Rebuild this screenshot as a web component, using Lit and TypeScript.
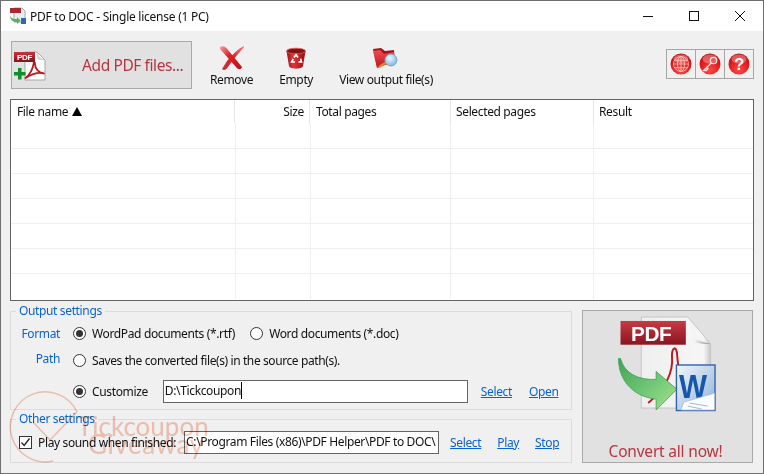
import { LitElement, html, css, svg } from 'lit';
import { customElement } from 'lit/decorators.js';

const COLUMNS = [
  { label: 'File name', cls: 'name' },
  { label: 'Size', cls: 'size' },
  { label: 'Total pages', cls: 'total' },
  { label: 'Selected pages', cls: 'selected' },
  { label: 'Result', cls: 'result' },
];

const addIcon = svg`
  <svg width="34" height="34" viewBox="0 0 34 34">
    <defs>
      <linearGradient id="ban" x1="0" y1="0" x2="0" y2="1"><stop offset="0" stop-color="#c9323c"/><stop offset="1" stop-color="#82141c"/></linearGradient>
      <linearGradient id="fold" x1="0" y1="0" x2="1" y2="1"><stop offset="0" stop-color="#fff"/><stop offset="1" stop-color="#b4b4b4"/></linearGradient>
    </defs>
    <path d="M11 4 H23 L31 12 V32 H11 Z" fill="#fdfdfd" stroke="#a8a8a8"/>
    <path d="M23 4 C24 8 25 11 31 12 L24 11 Z" fill="url(#fold)" stroke="#bbb" stroke-width=".5"/>
    <rect x="0" y="4" width="21" height="10" fill="url(#ban)"/>
    <text x="10.5" y="12" font-family="Liberation Sans" font-size="8" font-weight="700" fill="#fff" text-anchor="middle">PDF</text>
    <path d="M11.5 30 C16 27 19 20 19.5 16 C19.5 14 21 14 21 16 C21 21 25 25 30 25.5 C25 24 18 26 11.5 30 Z" fill="none" stroke="#bd141c" stroke-width="1.8" stroke-linejoin="round"/>
    <path d="M4 20 H7.5 V24 H11.5 V27.5 H7.5 V31.5 H4 V27.5 H0 V24 H4 Z" fill="#0d8f2b"/>
  </svg>`;

const removeIcon = svg`
  <svg width="26" height="26" viewBox="0 0 26 26">
    <defs>
      <linearGradient id="xa" x1="0" y1="0" x2="1" y2="1"><stop offset="0" stop-color="#f4a0a0"/><stop offset=".4" stop-color="#dc2228"/><stop offset="1" stop-color="#b81218"/></linearGradient>
      <linearGradient id="xb" x1="1" y1="0" x2="0" y2="1"><stop offset="0" stop-color="#f08888"/><stop offset=".5" stop-color="#d81c22"/><stop offset="1" stop-color="#c8363c"/></linearGradient>
    </defs>
    <path d="M1 2 C4 0 7 2 9 5 L23 22 C22 25 19 25 17 22 L1 4 Z" fill="url(#xa)"/>
    <path d="M25 1 C20 3 13 10 8 16 L3 24 C5 26 7 25 9 22 L14 15 C18 10 23 5 25 2 Z" fill="url(#xb)"/>
  </svg>`;

const emptyIcon = svg`
  <svg width="22" height="24" viewBox="0 0 22 24">
    <defs>
      <linearGradient id="bg" x1="0" y1="0" x2="1" y2="0"><stop offset="0" stop-color="#9c1016"/><stop offset=".35" stop-color="#e0363a"/><stop offset="1" stop-color="#940e14"/></linearGradient>
    </defs>
    <path d="M1.5 5 L4 20 C4.5 23.5 17.5 23.5 18 20 L20.5 5 Z" fill="url(#bg)"/>
    <ellipse cx="11" cy="5" rx="9.5" ry="2.8" fill="#86100f" stroke="#e4585c" stroke-width=".8"/>
    <g fill="none" stroke="#fff" stroke-width="1.7">
      <path d="M9 11.5 L11 8.8 L13 11.5"/>
      <path d="M15.5 12.8 L16.5 15.8 H13.5"/>
      <path d="M10 16 H6.6 L8.2 13"/>
    </g>
  </svg>`;

const viewIcon = svg`
  <svg width="28" height="24" viewBox="0 0 28 24">
    <defs>
      <linearGradient id="fg" x1="0" y1="0" x2="0" y2="1"><stop offset="0" stop-color="#ee4e54"/><stop offset="1" stop-color="#bc181e"/></linearGradient>
      <radialGradient id="mg" cx=".4" cy=".35" r=".7"><stop offset="0" stop-color="#eef8ff"/><stop offset="1" stop-color="#74b4e4"/></radialGradient>
    </defs>
    <path d="M1 3 L9 2 L13 5 L22 4 L23 16 L5 21 Z" fill="#a81218"/>
    <path d="M1 5 L8 4 L12 8 L22 6 L21 16 L5 22 Z" fill="url(#fg)"/>
    <path d="M7 21 L15 16" stroke="#dc8a30" stroke-width="2.6"/>
    <circle cx="19" cy="14" r="6" fill="url(#mg)" stroke="#84a4c0"/>
  </svg>`;

const sphere = (glyph: unknown) => svg`
  <svg width="22" height="22" viewBox="0 0 22 22">
    <defs>
      <radialGradient id="sp" cx=".5" cy=".8" r=".85"><stop offset="0" stop-color="#fb4a42"/><stop offset=".6" stop-color="#e0191c"/><stop offset="1" stop-color="#b20f12"/></radialGradient>
    </defs>
    <circle cx="11" cy="11" r="10.5" fill="url(#sp)"/>
    <ellipse cx="11" cy="6" rx="7.5" ry="4.5" fill="#fff" opacity=".3"/>
    ${glyph}
  </svg>`;

const globeIcon = sphere(svg`
  <g fill="none" stroke="#ffc9c4" stroke-width=".8">
    <circle cx="11" cy="11" r="7.5"/><ellipse cx="11" cy="11" rx="3.5" ry="7.5"/>
    <path d="M11 3.5 V18.5 M3.5 11 H18.5 M4.6 7.3 H17.4 M4.6 14.7 H17.4"/>
  </g>`);
const keyIcon = sphere(svg`
  <g fill="none" stroke="#ffe4e0" stroke-width="1.3">
    <circle cx="14.5" cy="7.5" r="3.2"/><path d="M12.3 10 L4.5 17.5 H7.5 L9 15.5 M7 15 L9.5 15.5"/>
  </g>`);
const helpIcon = sphere(svg`
  <text x="11" y="17" font-family="Liberation Sans" font-size="17" font-weight="700" fill="#fff" text-anchor="middle">?</text>`);

const convertIcon = svg`
  <svg width="102" height="98" viewBox="0 0 102 98">
    <defs>
      <linearGradient id="cb" x1="0" y1="0" x2="0" y2="1"><stop offset="0" stop-color="#c83a44"/><stop offset="1" stop-color="#8a1520"/></linearGradient>
      <linearGradient id="ca" x1="0" y1="0" x2="1" y2="1"><stop offset="0" stop-color="#3fa452"/><stop offset=".55" stop-color="#72c878"/><stop offset="1" stop-color="#a6e48c"/></linearGradient>
      <linearGradient id="cw" x1="0" y1="0" x2="1" y2="1"><stop offset="0" stop-color="#f2f6fb"/><stop offset="1" stop-color="#8fb2da"/></linearGradient>
      <linearGradient id="cf" x1="0" y1="0" x2="1" y2="1"><stop offset="0" stop-color="#fff"/><stop offset=".6" stop-color="#f2f2f2"/><stop offset="1" stop-color="#8c8c8c"/></linearGradient>
      <linearGradient id="cp" x1="0" y1="0" x2="1" y2="0"><stop offset="0" stop-color="#efefef"/><stop offset=".9" stop-color="#f6f6f6"/><stop offset="1" stop-color="#c8c8c8"/></linearGradient>
    </defs>
    <path d="M23 1 H70 L93 28 V93 H23 Z" fill="url(#cp)" stroke="#c4c4c4"/>
    <path d="M70 1 C71 15 74 25 93 28 C84 29 74 27 70 22 Z" fill="url(#cf)"/>
    <rect x="2" y="5" width="66" height="24" fill="url(#cb)"/>
    <text x="33" y="25" font-family="Liberation Sans" font-size="21" font-weight="700" fill="#fff" text-anchor="middle">PDF</text>
    <path d="M30 88 C44 76 56 60 54 40 C54 32 58 30 59 37 C60 48 60 55 66 66" fill="none" stroke="#c21820" stroke-width="2"/>
    <path d="M0 43 L2 43 C6 58 20 65 38 64 V56 L59 74 L38 95 V84 C18 82 0 68 0 43 Z" fill="url(#ca)" stroke="#3f9e50" stroke-width=".8"/>
    <rect x="58.5" y="49.5" width="39" height="46" fill="url(#cw)" stroke="#2f62a8" stroke-width="1.4"/>
    <text x="75" y="83" font-family="Liberation Sans" font-size="33" font-weight="700" fill="#1457ab" text-anchor="middle" textLength="28" lengthAdjust="spacingAndGlyphs">W</text>
    <path d="M63 95 L66 87 L97 78 V95 Z" fill="#fbfcfe" stroke="#a8bcd4" stroke-width=".8"/>
    <path d="M72 88 L90 91 M70 91 L84 94" stroke="#9db8d8" stroke-width="1"/>
  </svg>`;

const appIcon = svg`
  <svg width="18" height="18" viewBox="0 0 18 18">
    <path d="M5 1 H13 L16 4 V15 H5 Z" fill="#ececec" stroke="#a8a8a8"/>
    <rect x="1" y="1" width="11" height="5" fill="#a82830"/>
    <path d="M1 8 C2 12 5 12 8 12 V10 L11.5 13.5 L8 17 V15 C4 15 1 13 1 8 Z" fill="#58b060"/>
    <rect x="12" y="11" width="5" height="6" fill="#2c68b4"/>
  </svg>`;

const checkMark = svg`
  <svg width="11" height="11" viewBox="0 0 11 11"><path d="M1.5 5.5 L4.2 8.5 L9.5 1.5" fill="none" stroke="#222" stroke-width="1.3"/></svg>`;

const sortArrow = svg`
  <svg class="sort" width="10" height="9" viewBox="0 0 10 9"><path d="M5 0 L10 9 H0 Z" fill="#000"/></svg>`;

@customElement('app-root')
export class AppRoot extends LitElement {
  static styles = css`
    :host {
      display: block;
      position: relative;
      width: 764px;
      height: 474px;
      box-sizing: border-box;
      border: 1px solid #6f6f6f;
      background: #f0f0f0;
      overflow: hidden;
      font-family: 'Noto Sans', sans-serif;
      font-size: 12px;
      letter-spacing: -0.36px;
      color: #111;
    }
    button {
      font: inherit;
      letter-spacing: inherit;
      cursor: pointer;
      padding: 0;
    }
    .titlebar {
      height: 30px;
      background: #fff;
      display: flex;
      align-items: center;
      padding-left: 8px;
    }
    .titlebar .title {
      margin-left: 3px;
      flex: 1;
      letter-spacing: -0.25px;
    }
    .winctl {
      width: 46px;
      display: flex;
      justify-content: center;
    }
    .toolbar {
      height: 68px;
      display: flex;
      align-items: flex-start;
      padding-left: 10px;
      box-sizing: border-box;
    }
    .add {
      margin-top: 10px;
      width: 181px;
      height: 48px;
      border: 1px solid #a9a9a9;
      background: #e1e1e1;
      display: flex;
      align-items: center;
      padding: 0 0 0 2px;
      box-sizing: border-box;
    }
    .add span,
    .convert span {
      font-size: 15.5px;
      color: #b93440;
      letter-spacing: -0.2px;
    }
    .add span {
      margin-left: 34px;
      letter-spacing: -0.4px;
    }
    .tools {
      display: flex;
      gap: 26px;
      margin-left: 18px;
      flex: 1;
    }
    .tool {
      display: flex;
      flex-direction: column;
      align-items: center;
      height: 68px;
      padding-top: 14px;
      box-sizing: border-box;
    }
    .tool .ico {
      height: 26px;
      display: flex;
      align-items: center;
    }
    .tool .lbl {
      margin-top: 1px;
      line-height: 16px;
    }
    .links {
      display: flex;
      margin: 18px 9px 0 0;
      border: 1px solid #a6a6a6;
    }
    .links div {
      width: 28px;
      height: 28px;
      display: flex;
      align-items: center;
      justify-content: center;
    }
    .links div + div {
      border-left: 1px solid #a6a6a6;
    }
    .list {
      margin: 0 9px;
      height: 202px;
      box-sizing: border-box;
      border: 1px solid #646464;
      background: #fff;
    }
    .row {
      display: grid;
      grid-template-columns: 225px 75px 140px 143px 1fr;
      height: 25px;
      box-sizing: border-box;
      border-bottom: 1px solid #efefef;
    }
    .row > div {
      border-right: 1px solid #efefef;
      padding: 0 5px;
      line-height: 23px;
    }
    .row > div:last-child {
      border-right: 0;
    }
    .row.head {
      grid-template-columns: 224px 75px 141px 143px 1fr;
      height: 24px;
      border-bottom: 0;
    }
    .row.head > div {
      border-right-color: #e5e5e5;
    }
    .row.head .name {
      display: flex;
      align-items: center;
      gap: 4px;
      padding: 0 0 1px 6px;
      box-sizing: border-box;
      height: 23px;
    }
    .row.head .total {
      padding-left: 6px;
    }
    .size {
      text-align: right;
    }
    .row.last {
      border-bottom: 0;
    }
    .bottom {
      display: flex;
      margin: 2px 10px 0 9px;
    }
    .settings {
      width: 562px;
      flex: none;
    }
    fieldset {
      margin: 0;
      padding: 0;
      border: 1px solid #dcdcdc;
      box-sizing: border-box;
      min-width: 0;
    }
    legend {
      margin-left: 5px;
      padding: 0 3px;
      color: #0a62d0;
      line-height: 16px;
    }
    .output {
      height: 107px;
    }
    .grid {
      display: grid;
      grid-template-columns: 49px 1fr;
      grid-template-rows: 26px 28px 34px;
      column-gap: 13px;
      align-items: center;
      padding-top: 1px;
    }
    .key {
      text-align: right;
      color: #0a62d0;
    }
    .key.path {
      margin-bottom: 3px;
    }
    .line {
      display: flex;
      align-items: center;
    }
    .opt {
      display: flex;
      align-items: center;
      gap: 6px;
    }
    .opt + .opt {
      margin-left: 15px;
    }
    .opt.long {
      letter-spacing: -0.4px;
    }
    .radio {
      width: 13px;
      height: 13px;
      box-sizing: border-box;
      border: 1px solid #333;
      border-radius: 50%;
      background: #fff;
      display: flex;
      align-items: center;
      justify-content: center;
    }
    .radio.on::after {
      content: '';
      width: 7px;
      height: 7px;
      border-radius: 50%;
      background: #333;
    }
    .field {
      height: 23px;
      box-sizing: border-box;
      border: 1px solid #646464;
      background: #fff;
      padding-left: 1px;
      line-height: 19px;
      white-space: nowrap;
      overflow: hidden;
    }
    .field.path {
      width: 305px;
      margin-left: 15px;
    }
    .caret {
      border-right: 1px solid #000;
    }
    a {
      color: #0a62d0;
      text-decoration: underline;
    }
    .path-links {
      margin-left: 13px;
      display: flex;
      gap: 17px;
    }
    .other {
      height: 52px;
      margin-top: 1px;
    }
    .other .line {
      padding: 4px 0 0 8px;
    }
    .check {
      width: 13px;
      height: 13px;
      box-sizing: border-box;
      border: 1px solid #333;
      background: #fff;
      display: flex;
      align-items: center;
      justify-content: center;
      margin-right: 6px;
    }
    .field.sound {
      width: 255px;
      margin-left: 8px;
    }
    .sound-links {
      margin-left: 11px;
      display: flex;
      gap: 16px;
    }
    .convert {
      margin: 7px 0 0 10px;
      width: 171px;
      height: 153px;
      border: 1px solid #a9a9a9;
      background: #e1e1e1;
      display: flex;
      flex-direction: column;
      align-items: center;
      box-sizing: border-box;
    }
    .convert svg {
      margin: 5px 0 0 3px;
    }
    .convert span {
      margin: 27px 4px 0 0;
    }
    .stamp {
      position: absolute;
      left: 8px;
      top: 390px;
      width: 210px;
      height: 76px;
      pointer-events: none;
      color: #f8c8b8;
      mix-blend-mode: multiply;
      font-family: Lato, sans-serif;
      font-weight: 400;
      letter-spacing: 0;
    }
    .stamp svg {
      position: absolute;
      left: 0;
      top: 0;
    }
    .stamp .t1 {
      position: absolute;
      left: 68px;
      top: 20px;
      font-size: 26px;
      line-height: 30px;
    }
    .stamp .t2 {
      position: absolute;
      left: 79px;
      top: 38px;
      font-size: 26px;
      line-height: 30px;
      letter-spacing: 0.6px;
    }
  `;

  render() {
    return html`
      <div class="titlebar">
        ${appIcon}
        <div class="title">PDF to DOC - Single license (1 PC)</div>
        <div class="winctl">
          <svg width="10" height="10" viewBox="0 0 10 10"><path d="M0 5.5 H10" stroke="#111"/></svg>
        </div>
        <div class="winctl">
          <svg width="10" height="10" viewBox="0 0 10 10"><rect x=".5" y=".5" width="9" height="9" fill="none" stroke="#111"/></svg>
        </div>
        <div class="winctl">
          <svg width="10" height="10" viewBox="0 0 10 10"><path d="M0 0 L10 10 M10 0 L0 10" stroke="#111"/></svg>
        </div>
      </div>

      <div class="toolbar">
        <button class="add">${addIcon}<span>Add PDF files...</span></button>
        <div class="tools">
          <div class="tool"><div class="ico">${removeIcon}</div><div class="lbl">Remove</div></div>
          <div class="tool"><div class="ico">${emptyIcon}</div><div class="lbl">Empty</div></div>
          <div class="tool"><div class="ico">${viewIcon}</div><div class="lbl">View output file(s)</div></div>
        </div>
        <div class="links">
          <div>${globeIcon}</div>
          <div>${keyIcon}</div>
          <div>${helpIcon}</div>
        </div>
      </div>

      <div class="list">
        <div class="row head">
          ${COLUMNS.map(
            (c, i) => html`<div class=${c.cls}>${c.label}${i === 0 ? sortArrow : ''}</div>`
          )}
        </div>
        ${[0, 1, 2, 3, 4, 5, 6].map(
          i => html`<div class="row ${i === 6 ? 'last' : ''}">
            ${COLUMNS.map(() => html`<div></div>`)}
          </div>`
        )}
      </div>

      <div class="bottom">
        <div class="settings">
          <fieldset class="output">
            <legend>Output settings</legend>
            <div class="grid">
              <div class="key">Format</div>
              <div class="line">
                <label class="opt"><span class="radio on"></span>WordPad documents (*.rtf)</label>
                <label class="opt"><span class="radio"></span>Word documents (*.doc)</label>
              </div>
              <div class="key path">Path</div>
              <div class="line">
                <label class="opt long"><span class="radio"></span>Saves the converted file(s) in the source path(s).</label>
              </div>
              <div></div>
              <div class="line">
                <label class="opt"><span class="radio on"></span>Customize</label>
                <div class="field path"><span class="caret">D:\\Tickcoupon</span></div>
                <div class="path-links"><a>Select</a><a>Open</a></div>
              </div>
            </div>
          </fieldset>
          <fieldset class="other">
            <legend>Other settings</legend>
            <div class="line">
              <span class="check">${checkMark}</span>
              <span>Play sound when finished:</span>
              <div class="field sound">C:\\Program Files (x86)\\PDF Helper\\PDF to DOC\\</div>
              <div class="sound-links"><a>Select</a><a>Play</a><a>Stop</a></div>
            </div>
          </fieldset>
        </div>
        <button class="convert">${convertIcon}<span>Convert all now!</span></button>
      </div>

      <div class="stamp">
        <svg width="90" height="76" viewBox="0 0 90 76" fill="none" stroke="#f8c8b8" stroke-width="1.5">
          <path d="M68 21 A35 35 0 1 0 44 70"/>
          <path d="M24 31 L41 49 L68 21"/>
        </svg>
        <div class="t1">Tickcoupon</div>
        <div class="t2">Giveaway</div>
      </div>
    `;
  }
}
